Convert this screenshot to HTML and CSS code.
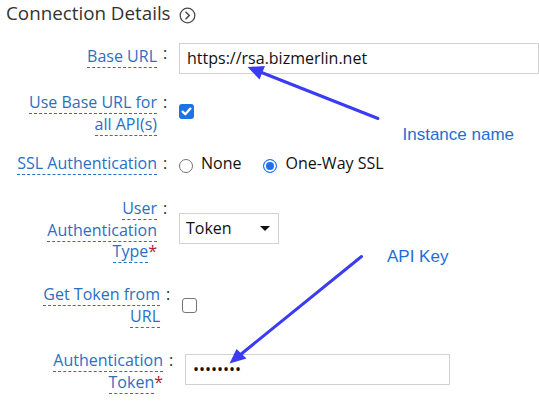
FILE: index.html
```html
<!DOCTYPE html>
<html>
<head>
<meta charset="utf-8">
<link rel="stylesheet" href="styles.css">
</head>
<body>
<div class="page">
  <h2 class="title">Connection Details <svg class="title-icon" width="17" height="17" viewBox="0 0 17 17"><circle cx="8.5" cy="8.5" r="7.3" fill="none" stroke="#4a4a4a" stroke-width="1.3"/><path d="M7 5.2 L10.3 8.5 L7 11.8" fill="none" stroke="#4a4a4a" stroke-width="1.6" stroke-linecap="round" stroke-linejoin="round"/></svg></h2>

  <div class="form">
    <div class="row row-url">
      <div class="label"><span class="lbl">Base URL</span></div>
      <span class="colon">:</span>
      <input class="text-input url-input" type="text" value="https://rsa.bizmerlin.net">
    </div>

    <div class="row row-all">
      <div class="label"><span class="lbl">Use Base URL for all API(s)</span></div>
      <span class="colon">:</span>
      <span class="checkbox checked"><svg width="15" height="15" viewBox="0 0 15 15"><path d="M3.6 7.6 L6.3 10.3 L11.4 4.6" fill="none" stroke="#fff" stroke-width="2.3" stroke-linecap="round" stroke-linejoin="round"/></svg></span>
    </div>

    <div class="row row-ssl">
      <div class="label"><span class="lbl">SSL Authentication</span></div>
      <span class="colon">:</span>
      <div class="radios">
        <span class="radio"></span><span class="radio-text">None</span>
        <span class="radio checked"></span><span class="radio-text">One-Way SSL</span>
      </div>
    </div>

    <div class="row row-type">
      <div class="label"><span class="lbl">User Authentication</span> <span class="lbl">Type</span><span class="req">*</span></div>
      <span class="colon">:</span>
      <div class="select"><span>Token</span><span class="caret"></span></div>
    </div>

    <div class="row row-get">
      <div class="label"><span class="lbl">Get Token from URL</span></div>
      <span class="colon">:</span>
      <span class="checkbox"></span>
    </div>

    <div class="row row-token">
      <div class="label"><span class="lbl">Authentication</span> <span class="lbl">Token</span><span class="req">*</span></div>
      <span class="colon">:</span>
      <input class="text-input token-input" type="password" value="abcdefgh">
    </div>
  </div>

  <span class="note note-instance">Instance name</span>
  <span class="note note-api">API Key</span>

  <svg class="arrows" width="539" height="401" viewBox="0 0 539 401">
    <line x1="378" y1="118.5" x2="259" y2="71.5" stroke="#3b3bf4" stroke-width="3" stroke-linecap="round"/>
    <polygon points="247.5,67 265,66 259.5,79.5" fill="#3b3bf4"/>
    <line x1="361.5" y1="256.5" x2="240" y2="355" stroke="#3b3bf4" stroke-width="3" stroke-linecap="round"/>
    <polygon points="229.5,363.5 236.5,349 246.5,358.5" fill="#3b3bf4"/>
  </svg>
</div>
</body>
</html>
```

FILE: styles.css
```css
html, body {
  margin: 0;
  padding: 0;
  background: #fff;
}

body {
  font-family: "Open Sans", "Noto Sans", sans-serif;
  font-size: 16px;
  color: #222;
}

.page {
  position: relative;
  width: 539px;
  height: 401px;
  overflow: hidden;
}

.title {
  margin: 0;
  padding: 1px 0 0 6px;
  font-size: 18.8px;
  font-weight: 400;
  line-height: 25px;
  color: #333;
}

.title-icon {
  vertical-align: -4px;
  margin-left: 4px;
}

.form {
  margin-top: 17px;
}

.row {
  display: flex;
  align-items: flex-start;
}

.label {
  width: 147px;
  margin-left: 10px;
  text-align: right;
  line-height: 21.5px;
  color: #2a6fc4;
}

.lbl {
  border-bottom: 1px dashed #2a6fc4;
}

.req {
  color: #b0213a;
}

.colon {
  width: 22px;
  padding-left: 6px;
  box-sizing: border-box;
  line-height: 21.5px;
  color: #222;
}

.text-input {
  box-sizing: border-box;
  height: 31px;
  margin: 0;
  padding: 0 7px 2px;
  border: 1px solid #d2d2d2;
  border-radius: 0;
  background: #fff;
  font-family: "Open Sans", "Noto Sans", sans-serif;
  font-size: 16px;
  color: #111;
  outline: none;
}

/* Row placement */
.row-url .label { margin-top: 3px; }
.url-input { width: 360px; }

.row-all { margin-top: 18px; }
.row-all .checkbox { margin-top: 12px; }

.row-ssl { margin-top: 18px; }

.row-type { margin-top: 23.5px; }
.row-type .select { margin-top: 15px; }

.row-get { margin-top: 21.5px; margin-left: 3px; }
.row-get .checkbox { margin-top: 14px; }

.row-token { margin-top: 23px; margin-left: 6px; }
.token-input { width: 265px; margin-top: 4px; }

/* Checkboxes */
.checkbox {
  display: block;
  box-sizing: border-box;
  width: 15px;
  height: 15px;
  border: 1.4px solid #767676;
  border-radius: 3px;
  background: #fff;
}

.checkbox.checked {
  border: none;
  background: #1a73e8;
}

.checkbox svg {
  display: block;
}

/* Radios */
.radios {
  display: flex;
  align-items: flex-start;
  line-height: 21.5px;
  color: #111;
}

.radio {
  box-sizing: border-box;
  width: 14px;
  height: 14px;
  margin-top: 6px;
  margin-right: 8px;
  border: 1px solid #767676;
  border-radius: 50%;
  background: #fff;
}

.radio.checked {
  margin-left: 22px;
  border: 1.5px solid #1a73e8;
  background: #1a73e8;
  box-shadow: inset 0 0 0 2px #fff;
}

/* Select */
.select {
  box-sizing: border-box;
  display: flex;
  align-items: center;
  justify-content: space-between;
  width: 100px;
  height: 31px;
  padding: 0 8px 0 6px;
  border: 1px solid #d2d2d2;
  background: #fff;
  color: #111;
  line-height: 21.5px;
}

.caret {
  width: 0;
  height: 0;
  border-left: 5px solid transparent;
  border-right: 5px solid transparent;
  border-top: 5.5px solid #111;
}

/* Annotations overlay */
.note {
  position: absolute;
  font-family: "Liberation Sans", Arial, sans-serif;
  font-size: 17px;
  line-height: 17px;
  color: #1c6ed8;
  white-space: nowrap;
}

.note-instance {
  left: 402.5px;
  top: 126px;
}

.note-api {
  left: 387px;
  top: 248px;
}

.arrows {
  position: absolute;
  left: 0;
  top: 0;
  pointer-events: none;
}
```
